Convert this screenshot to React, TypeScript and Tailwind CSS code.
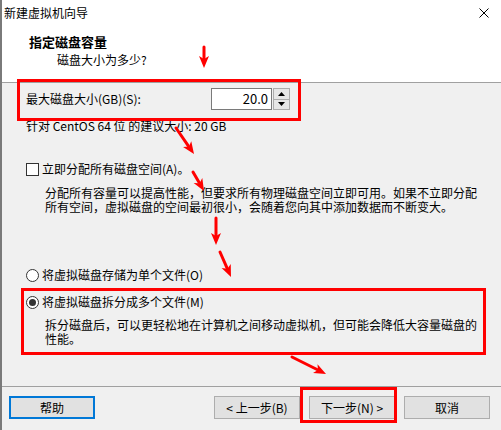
import React from "react";

type A = { x1: number; y1: number; x2: number; y2: number };

const arrows: A[] = [
  { x1: 204, y1: 47, x2: 204, y2: 68 },
  { x1: 176, y1: 128, x2: 194, y2: 154 },
  { x1: 193, y1: 172, x2: 204, y2: 191 },
  { x1: 216, y1: 218, x2: 216, y2: 245 },
  { x1: 220, y1: 252, x2: 231, y2: 277 },
  { x1: 292, y1: 357, x2: 326, y2: 374 },
];

function Arrow({ x1, y1, x2, y2 }: A) {
  const dx = x2 - x1;
  const dy = y2 - y1;
  const len = Math.sqrt(dx * dx + dy * dy);
  const ux = dx / len;
  const uy = dy / len;
  const px = -uy;
  const py = ux;
  const head = 12;
  const hw = 5;
  const bx = x2 - ux * head;
  const by = y2 - uy * head;
  const pts = `${x2},${y2} ${bx + px * hw},${by + py * hw} ${bx + ux * 3},${by + uy * 3} ${bx - px * hw},${by - py * hw}`;
  return (
    <g>
      <line x1={x1} y1={y1} x2={bx + ux * 2} y2={by + uy * 2} stroke="#ff0000" strokeWidth={3} strokeLinecap="round" />
      <polygon points={pts} fill="#ff0000" />
    </g>
  );
}

function Btn({ children, focus }: { children: React.ReactNode; focus?: boolean }) {
  return (
    <div
      className={
        "w-[86px] h-[23px] flex items-center justify-center bg-[#e1e1e1] text-[12px] leading-[14px] text-black " +
        (focus ? "border-2 border-[#0078d7]" : "border border-[#adadad]")
      }
    >
      {children}
    </div>
  );
}

export default function App() {
  return (
    <div
      className="relative w-[501px] h-[430px] overflow-hidden"
      style={{ fontFamily: '"Noto Sans CJK SC", "Noto Sans", sans-serif' }}
    >
      <div className="flex flex-col w-full h-full bg-[#f0f0f0] border-l-2 border-[#7a7a7a] text-black text-[12px]">
        {/* header */}
        <div className="bg-white border-b border-[#a0a0a0] h-[83px] flex flex-col">
          <div className="h-[26px] flex items-center justify-between pl-[2px] pr-[12px]">
            <span className="text-[12px] leading-[16px]">新建虚拟机向导</span>
            <svg width="10" height="10" viewBox="0 0 10 10">
              <path d="M0.5 0.5 L9.5 9.5 M9.5 0.5 L0.5 9.5" stroke="#000" strokeWidth="1" />
            </svg>
          </div>
          <div className="mt-[8px] pl-[27px] text-[13px] leading-[16px] font-bold">指定磁盘容量</div>
          <div className="mt-[2px] pl-[55px] text-[12px] leading-[16px]">磁盘大小为多少?</div>
        </div>

        {/* content */}
        <div className="flex flex-col">
          <div className="mt-[5px] h-[22px] flex items-center pl-[24px]">
            <span className="w-[185px] leading-[16px]">最大磁盘大小(GB)(S):</span>
            <div className="w-[61px] h-[22px] bg-white border border-[#7a7a7a] flex items-center justify-end pr-[3px] text-[13px] leading-[16px]">
              20.0
            </div>
            <div className="ml-[1px] w-[17px] h-[22px] flex flex-col border border-[#acacac] bg-[#e6e6e6]">
              <div className="flex-1 flex items-center justify-center border-b border-[#acacac]">
                <svg width="7" height="4" viewBox="0 0 7 4">
                  <path d="M0 4 L3.5 0 L7 4 Z" fill="#000" />
                </svg>
              </div>
              <div className="flex-1 flex items-center justify-center">
                <svg width="7" height="4" viewBox="0 0 7 4">
                  <path d="M0 0 L3.5 4 L7 0 Z" fill="#000" />
                </svg>
              </div>
            </div>
          </div>
          <div className="mt-[8px] pl-[24px] leading-[16px]">针对 CentOS 64 位 的建议大小: 20 GB</div>

          <div className="mt-[27px] pl-[24px] h-[16px] flex items-center">
            <div className="w-[13px] h-[13px] bg-white border border-[#333333]" />
            <span className="ml-[3px] leading-[16px]">立即分配所有磁盘空间(A)。</span>
          </div>
          <div className="mt-[9px] pl-[43px] leading-[14px]">
            <div>分配所有容量可以提高性能，但要求所有物理磁盘空间立即可用。如果不立即分配</div>
            <div>所有空间，虚拟磁盘的空间最初很小，会随着您向其中添加数据而不断变大。</div>
          </div>

          <div className="mt-[53px] pl-[24px] h-[16px] flex items-center">
            <div className="w-[13px] h-[13px] rounded-full bg-white border border-[#333333]" />
            <span className="ml-[3px] leading-[16px]">将虚拟磁盘存储为单个文件(O)</span>
          </div>
          <div className="mt-[11px] pl-[24px] h-[16px] flex items-center">
            <div className="w-[13px] h-[13px] rounded-full bg-white border border-[#333333] flex items-center justify-center">
              <div className="w-[7px] h-[7px] rounded-full bg-[#333333]" />
            </div>
            <span className="ml-[3px] leading-[16px]">将虚拟磁盘拆分成多个文件(M)</span>
          </div>
          <div className="mt-[8px] pl-[43px] leading-[14px]">
            <div>拆分磁盘后，可以更轻松地在计算机之间移动虚拟机，但可能会降低大容量磁盘的</div>
            <div>性能。</div>
          </div>
        </div>

        {/* footer */}
        <div className="mt-auto h-[44px] border-t border-[#a0a0a0] flex items-start pt-[9px] pl-[7px] pr-[11px]">
          <Btn focus>帮助</Btn>
          <div className="ml-auto flex gap-[9px]">
            <Btn>&lt; 上一步(B)</Btn>
            <Btn>下一步(N) &gt;</Btn>
            <Btn>取消</Btn>
          </div>
        </div>
      </div>

      {/* annotations */}
      <div className="absolute left-[17px] top-[79px] w-[284px] h-[42px] border-[3px] border-[#ff0000] pointer-events-none" />
      <div className="absolute left-[21px] top-[288px] w-[465px] h-[67px] border-[3px] border-[#ff0000] pointer-events-none" />
      <div className="absolute left-[300px] top-[387px] w-[97px] h-[36px] border-[3px] border-[#ff0000] pointer-events-none" />
      <svg className="absolute left-0 top-0 pointer-events-none" width="501" height="430">
        {arrows.map((a, i) => (
          <Arrow key={i} {...a} />
        ))}
      </svg>
    </div>
  );
}
